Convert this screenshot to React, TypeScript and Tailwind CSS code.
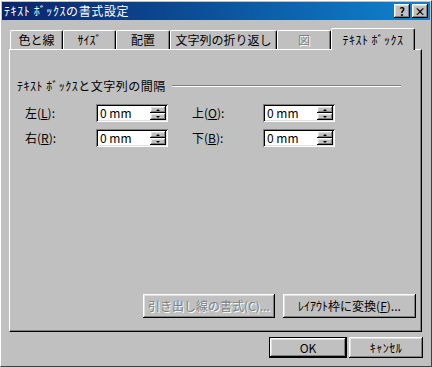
const raised =
  "shadow-[inset_-1px_-1px_#000,inset_1px_1px_#fff,inset_-2px_-2px_#808080,inset_2px_2px_#dfdfdf]";
const sunken =
  "shadow-[inset_1px_1px_#808080,inset_-1px_-1px_#fff,inset_2px_2px_#000,inset_-2px_-2px_#dfdfdf]";

function Tab({ label, width, disabled }: { label: string; width: string; disabled?: boolean }) {
  return (
    <div
      className={`${width} h-[19px] flex items-center justify-center whitespace-nowrap border-t border-l border-t-white border-l-white border-r border-r-black rounded-tl-[2px] rounded-tr-[2px] shadow-[inset_-1px_0_#808080] ${
        disabled ? "text-[#808080] [text-shadow:1px_1px_0_#fff]" : "text-black"
      }`}
    >
      {label}
    </div>
  );
}

function Spin() {
  return (
    <div className="flex flex-col w-[16px] h-[14px] mr-[2px]">
      <div className={`flex-1 bg-[#c0c0c0] flex items-center justify-center ${raised}`}>
        <div className="w-0 h-0 border-l-[2px] border-r-[2px] border-b-[2px] border-l-transparent border-r-transparent border-b-black" />
      </div>
      <div className={`flex-1 bg-[#c0c0c0] flex items-center justify-center ${raised}`}>
        <div className="w-0 h-0 border-l-[2px] border-r-[2px] border-t-[2px] border-l-transparent border-r-transparent border-t-black" />
      </div>
    </div>
  );
}

function SpinInput() {
  return (
    <div className={`w-[72px] h-[18px] bg-white flex items-center justify-between pl-[4px] ${sunken}`}>
      <span className="text-[12px] leading-none whitespace-pre">0 mm</span>
      <Spin />
    </div>
  );
}

function Field({ label, key1 }: { label: string; key1: string }) {
  return (
    <div className="flex items-center">
      <span className="w-[71px]">
        {label}(<span className="underline">{key1}</span>):
      </span>
      <SpinInput />
    </div>
  );
}

export default function App() {
  return (
    <div className="w-[432px] h-[367px] bg-[#c0c0c0] border border-t-white border-l-white border-r-[#404040] border-b-[#404040] p-[1px] flex flex-col font-['Noto_Sans_CJK_JP','Noto_Sans_CJK_SC',sans-serif] text-[12px] text-black overflow-hidden">
      {/* タイトルバー */}
      <div className="h-[18px] bg-gradient-to-r from-[#0a246a] to-[#1084d0] flex items-center justify-between pl-[2px] pr-[2px]">
        <span className="text-white text-[12px] leading-none tracking-[0.6px]">ﾃｷｽﾄ ﾎﾞｯｸｽの書式設定</span>
        <div className="flex gap-[2px]">
          <div className={`w-[16px] h-[14px] bg-[#c0c0c0] flex items-center justify-center font-bold text-[11px] leading-none ${raised}`}>
            ?
          </div>
          <div className={`w-[16px] h-[14px] bg-[#c0c0c0] flex items-center justify-center font-bold text-[11px] leading-none ${raised}`}>
            ×
          </div>
        </div>
      </div>

      {/* タブ */}
      <div className="mt-[8px] ml-[8px] h-[21px] flex items-end">
        <Tab label="色と線" width="w-[53px]" />
        <Tab label="ｻｲｽﾞ" width="w-[53px]" />
        <Tab label="配置" width="w-[54px]" />
        <Tab label="文字列の折り返し" width="w-[107px]" />
        <Tab label="図" width="w-[54px]" disabled />
        <div className="w-[84px] h-[22px] -mb-px relative z-10 bg-[#c0c0c0] flex items-center justify-center whitespace-nowrap tracking-[0.5px] border-t border-l border-t-white border-l-white border-r border-r-black rounded-tl-[2px] rounded-tr-[2px] shadow-[inset_-1px_0_#808080]">
          ﾃｷｽﾄ ﾎﾞｯｸｽ
        </div>
      </div>

      {/* パネル */}
      <div className="ml-[7px] mr-[8px] h-[283px] border border-t-white border-l-white border-r-black border-b-black shadow-[inset_-1px_-1px_#808080] flex flex-col">
        <div className="mt-[27px] ml-[7px] mr-[20px] flex items-center gap-[6px]">
          <span className="whitespace-nowrap tracking-[0.5px]">ﾃｷｽﾄ ﾎﾞｯｸｽと文字列の間隔</span>
          <div className="flex-1 border-t border-t-[#808080] border-b border-b-white" />
        </div>
        <div className="mt-[9px] ml-[15px] flex flex-col gap-[7px]">
          <div className="flex gap-[24px]">
            <Field label="左" key1="L" />
            <Field label="上" key1="O" />
          </div>
          <div className="flex gap-[24px]">
            <Field label="右" key1="R" />
            <Field label="下" key1="B" />
          </div>
        </div>
        <div className="mt-auto mb-[13px] mr-[5px] flex justify-end gap-[8px]">
          <div className={`w-[132px] h-[24px] flex items-center justify-center whitespace-nowrap text-[#808080] [text-shadow:1px_1px_0_#fff] ${raised}`}>
            引き出し線の書式(C)...
          </div>
          <div className={`w-[133px] h-[24px] flex items-center justify-center whitespace-nowrap ${raised}`}>
            <span>
              ﾚｲｱｳﾄ枠に変換(<span className="underline">F</span>)...
            </span>
          </div>
        </div>
      </div>

      {/* OK / キャンセル */}
      <div className="mt-[5px] mr-[7px] flex justify-end gap-[2px]">
        <div className="w-[78px] h-[21px] border border-black">
          <div className={`w-full h-full flex items-center justify-center ${raised}`}>OK</div>
        </div>
        <div className={`w-[74px] h-[21px] flex items-center justify-center tracking-[0.5px] ${raised}`}>ｷｬﾝｾﾙ</div>
      </div>
    </div>
  );
}
